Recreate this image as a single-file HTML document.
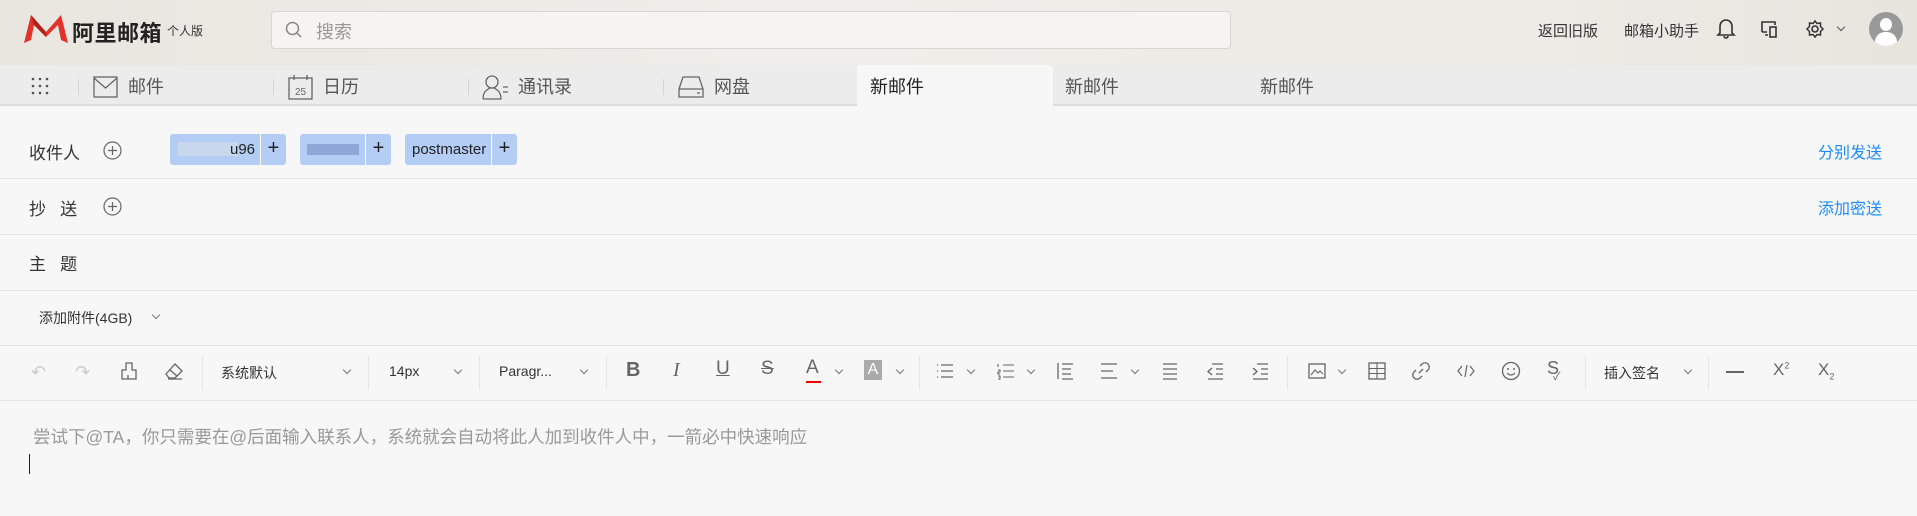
<!DOCTYPE html>
<html><head><meta charset="utf-8"><style>
*{margin:0;padding:0;box-sizing:border-box}
body{width:1917px;height:516px;overflow:hidden;background:#f7f7f7;font-family:"Liberation Sans","Noto Sans CJK SC",sans-serif;color:#333;position:relative}
.a{position:absolute;white-space:nowrap}
.hdr{left:0;top:0;width:1917px;height:65px;background:linear-gradient(90deg,#e9e5df,#f0eeea 40%,#eeebe6 80%,#e8e4de)}
.tabs{left:0;top:65px;width:1917px;height:41px;background:#ececec;border-bottom:2px solid #dcdcdc}
.sep{width:1px;height:16px;background:#d4d4d4;top:79px}
.tab{font-size:18px;color:#555;top:73px}
.line{left:0;width:1917px;height:1px;background:#e4e4e4}
.lbl{font-size:17px;color:#333}
.chip{height:31px;top:134px;background:#b3cdf5;border-radius:3px;font-size:15px;color:#222;line-height:31px}
.chip .p{position:absolute;right:0;top:0;width:26px;height:31px;border-left:1px solid #fff;text-align:center;font-size:20px;line-height:29px}
.blue{color:#1a8cff;font-size:16px}
.tb{top:363px;font-size:14px;color:#333}
.ic{top:361px;width:20px;height:20px;color:#666}
.tsep{top:356px;width:1px;height:34px;background:#e6e6e6}
.chev{top:367px;width:6px;height:6px;border-right:1.2px solid #777;border-bottom:1.2px solid #777;transform:rotate(45deg)}
svg{display:block}
</style></head><body>
<div class="a hdr"></div>
<svg class="a" style="left:24px;top:15px" width="44" height="30" viewBox="0 0 44 30"><path d="M0 28 L7 0 L22 17 L37 0 L44 28 L37 25 L34 10 L22 22 L10 10 L7 25Z" fill="#e3312c"/><path d="M7 0 L22 17 L22 22 L10 10Z" fill="#b0201c"/></svg>
<div class="a" style="left:72px;top:16px;font-size:22px;font-weight:bold;color:#222;letter-spacing:0.5px">阿里邮箱</div>
<div class="a" style="left:167px;top:22px;font-size:12px;color:#333">个人版</div>
<div class="a" style="left:271px;top:11px;width:960px;height:38px;background:#f5f4f2;border:1px solid #d8d6d2;border-radius:4px"></div>
<svg class="a" style="left:285px;top:21px" width="18" height="18" viewBox="0 0 18 18"><circle cx="7.5" cy="7.5" r="6" fill="none" stroke="#888" stroke-width="1.5"/><path d="M12 12 L16 16" stroke="#888" stroke-width="1.5"/></svg>
<div class="a" style="left:316px;top:18px;font-size:18px;color:#999">搜索</div>
<div class="a" style="left:1538px;top:20px;font-size:15px;color:#333">返回旧版</div>
<div class="a" style="left:1624px;top:20px;font-size:15px;color:#333">邮箱小助手</div>
<svg class="a" style="left:1716px;top:17px" width="20" height="22" viewBox="0 0 20 22"><path d="M4 16 V9 a6 6 0 0 1 12 0 V16 L18 18 H2Z M8 19 a2 2 0 0 0 4 0" fill="none" stroke="#333" stroke-width="1.6"/></svg>
<svg class="a" style="left:1759px;top:19px" width="20" height="20" viewBox="0 0 20 20"><path d="M3 13 V3 H16 V6 M3 13 H8 M6 16 H9" fill="none" stroke="#333" stroke-width="1.6"/><rect x="11" y="8" width="6" height="10" fill="none" stroke="#333" stroke-width="1.6"/></svg>
<svg class="a" style="left:1805px;top:19px" width="20" height="20" viewBox="0 0 20 20"><circle cx="10" cy="10" r="3" fill="none" stroke="#333" stroke-width="1.6"/><path d="M10 2 L12 4.5 L15.5 4 L15.5 7.5 L18 10 L15.5 12.5 L15.5 16 L12 15.5 L10 18 L8 15.5 L4.5 16 L4.5 12.5 L2 10 L4.5 7.5 L4.5 4 L8 4.5Z" fill="none" stroke="#333" stroke-width="1.5"/></svg>
<div class="a chev" style="left:1838px;top:24px;border-color:#555"></div>
<div class="a" style="left:1869px;top:12px;width:34px;height:34px;border-radius:50%;background:#999;overflow:hidden"><div style="position:absolute;left:11px;top:6px;width:12px;height:13px;border-radius:50%;background:#fff"></div><div style="position:absolute;left:6px;top:20px;width:22px;height:16px;border-radius:10px 10px 0 0;background:#fff"></div></div>

<div class="a tabs"></div>
<div class="a" style="left:857px;top:65px;width:196px;height:41px;background:#f7f7f7;border-radius:4px 4px 0 0"></div>
<svg class="a" style="left:31px;top:77px" width="18" height="18" viewBox="0 0 18 18" fill="#555"><circle cx="2" cy="2" r="1.3"/><circle cx="9" cy="2" r="1.3"/><circle cx="16" cy="2" r="1.3"/><circle cx="2" cy="9" r="1.3"/><circle cx="9" cy="9" r="1.3"/><circle cx="16" cy="9" r="1.3"/><circle cx="2" cy="16" r="1.3"/><circle cx="9" cy="16" r="1.3"/><circle cx="16" cy="16" r="1.3"/></svg>
<div class="a sep" style="left:78px"></div><div class="a sep" style="left:273px"></div><div class="a sep" style="left:468px"></div><div class="a sep" style="left:663px"></div>
<svg class="a" style="left:93px;top:76px" width="25" height="22" viewBox="0 0 25 22"><rect x="1" y="1" width="23" height="20" fill="none" stroke="#666" stroke-width="1.3"/><path d="M1 2 L12.5 12 L24 2" fill="none" stroke="#666" stroke-width="1.3"/></svg>
<div class="a tab" style="left:128px">邮件</div>
<svg class="a" style="left:288px;top:74px" width="25" height="26" viewBox="0 0 25 26"><rect x="1" y="4" width="23" height="21" fill="none" stroke="#666" stroke-width="1.3"/><path d="M6 1 V6 M19 1 V6" stroke="#666" stroke-width="1.3"/><text x="12.5" y="21" font-size="10" text-anchor="middle" fill="#666" font-family="Liberation Sans">25</text></svg>
<div class="a tab" style="left:323px">日历</div>
<svg class="a" style="left:482px;top:74px" width="28" height="26" viewBox="0 0 28 26"><circle cx="10" cy="8" r="6" fill="none" stroke="#666" stroke-width="1.3"/><path d="M1 25 C1 17 6 15 8 14 M12 14 C14 15 19 17 19 25 H1" fill="none" stroke="#666" stroke-width="1.3"/><path d="M21 13 H26 M21 18 H26" stroke="#666" stroke-width="1.3"/></svg>
<div class="a tab" style="left:518px">通讯录</div>
<svg class="a" style="left:678px;top:76px" width="26" height="22" viewBox="0 0 26 22"><path d="M1 13 L5 1 H21 L25 13 V21 H1Z M1 13 H25 M19 17 H22" fill="none" stroke="#666" stroke-width="1.3"/></svg>
<div class="a tab" style="left:714px">网盘</div>
<div class="a tab" style="left:870px;color:#222">新邮件</div>
<div class="a tab" style="left:1065px">新邮件</div>
<div class="a tab" style="left:1260px">新邮件</div>

<div class="a lbl" style="left:29px;top:139px">收件人</div>
<svg class="a" style="left:103px;top:141px" width="19" height="19" viewBox="0 0 19 19"><circle cx="9.5" cy="9.5" r="8.5" fill="none" stroke="#666" stroke-width="1.2"/><path d="M5 9.5 H14 M9.5 5 V14" stroke="#666" stroke-width="1.2"/></svg>
<div class="a chip" style="left:170px;width:116px"><span style="position:absolute;left:8px;top:8px;width:60px;height:14px;background:#c9d7ec"></span><span style="position:absolute;left:60px">u96</span><div class="p">+</div></div>
<div class="a chip" style="left:300px;width:91px"><span style="position:absolute;left:7px;top:10px;width:52px;height:11px;background:#8ea7d6"></span><div class="p">+</div></div>
<div class="a chip" style="left:405px;width:112px"><span style="position:absolute;left:7px">postmaster</span><div class="p">+</div></div>
<div class="a blue" style="left:1818px;top:139px">分别发送</div>
<div class="a line" style="top:178px"></div>
<div class="a lbl" style="left:29px;top:195px">抄&nbsp;&nbsp;&nbsp;送</div>
<svg class="a" style="left:103px;top:197px" width="19" height="19" viewBox="0 0 19 19"><circle cx="9.5" cy="9.5" r="8.5" fill="none" stroke="#666" stroke-width="1.2"/><path d="M5 9.5 H14 M9.5 5 V14" stroke="#666" stroke-width="1.2"/></svg>
<div class="a blue" style="left:1818px;top:195px">添加密送</div>
<div class="a line" style="top:234px"></div>
<div class="a lbl" style="left:29px;top:250px">主&nbsp;&nbsp;&nbsp;题</div>
<div class="a line" style="top:290px"></div>
<div class="a" style="left:39px;top:308px;font-size:14px;color:#333">添加附件(4GB)</div>
<div class="a chev" style="left:153px;top:312px"></div>
<div class="a line" style="top:345px"></div>

<div class="a" style="left:31px;top:362px;font-size:18px;color:#ccc">&#8630;</div>
<div class="a" style="left:75px;top:362px;font-size:18px;color:#ccc">&#8631;</div>
<svg class="a ic" style="left:119px" viewBox="0 0 20 20"><path d="M7 2 H13 V9 H17 V18 H3 V9 H7Z M9 18 V14" fill="none" stroke="#666" stroke-width="1.3"/></svg>
<svg class="a ic" style="left:164px" viewBox="0 0 20 20"><path d="M2 13 L11 3 L18 10 L11 17 H5Z M6 9 L13 15 M4 18 H18" fill="none" stroke="#666" stroke-width="1.3"/></svg>
<div class="a tsep" style="left:202px"></div>
<div class="a tb" style="left:221px">系统默认</div><div class="a chev" style="left:344px"></div>
<div class="a tsep" style="left:368px"></div>
<div class="a tb" style="left:389px">14px</div><div class="a chev" style="left:455px"></div>
<div class="a tsep" style="left:479px"></div>
<div class="a tb" style="left:499px">Paragr...</div><div class="a chev" style="left:581px"></div>
<div class="a tsep" style="left:606px"></div>
<div class="a" style="left:626px;top:359px;font-size:20px;color:#666;font-weight:bold">B</div>
<div class="a" style="left:673px;top:359px;font-size:20px;color:#666;font-style:italic;font-family:'Liberation Serif',serif">I</div>
<div class="a" style="left:716px;top:358px;font-size:19px;color:#666;text-decoration:underline">U</div>
<div class="a" style="left:761px;top:358px;font-size:19px;color:#666;text-decoration:line-through">S</div>
<div class="a" style="left:806px;top:357px;font-size:19px;color:#666">A</div><div class="a" style="left:806px;top:381px;width:15px;height:2px;background:#e00"></div><div class="a chev" style="left:836px"></div>
<div class="a" style="left:864px;top:360px;width:18px;height:20px;background:#aaa;color:#fff;font-size:16px;text-align:center;line-height:20px">A</div><div class="a chev" style="left:897px"></div>
<div class="a tsep" style="left:919px"></div>
<svg class="a ic" style="left:935px" viewBox="0 0 20 20"><path d="M2 4 H3 M2 10 H3 M2 16 H3 M6 4 H18 M6 10 H18 M6 16 H18" stroke="#666" stroke-width="1.3"/></svg><div class="a chev" style="left:968px"></div>
<svg class="a ic" style="left:996px" viewBox="0 0 20 20"><path d="M2 3 V6 M2 9 H4 V11 H2 V13 H4 M2 15 H4 V18 H2 M7 4 H18 M7 10 H18 M7 16 H18" fill="none" stroke="#666" stroke-width="1.1"/></svg><div class="a chev" style="left:1028px"></div>
<svg class="a ic" style="left:1055px" viewBox="0 0 20 20"><path d="M3 2 V18 M7 3 H18 M7 8 H16 M7 13 H16 M7 18 H18" stroke="#666" stroke-width="1.3"/></svg>
<svg class="a ic" style="left:1099px" viewBox="0 0 20 20"><path d="M2 3 H18 M2 10 H14 M2 17 H18" stroke="#666" stroke-width="1.3"/></svg><div class="a chev" style="left:1132px"></div>
<svg class="a ic" style="left:1160px" viewBox="0 0 20 20"><path d="M3 3 H17 M3 8 H17 M3 13 H17 M3 18 H17" stroke="#666" stroke-width="1.3"/></svg>
<svg class="a ic" style="left:1205px" viewBox="0 0 20 20"><path d="M7 3 H18 M11 8 H18 M11 13 H18 M3 18 H18 M7 7 L3 10.5 L7 14" fill="none" stroke="#666" stroke-width="1.3"/></svg>
<svg class="a ic" style="left:1250px" viewBox="0 0 20 20"><path d="M7 3 H18 M11 8 H18 M11 13 H18 M3 18 H18 M3 7 L7 10.5 L3 14" fill="none" stroke="#666" stroke-width="1.3"/></svg>
<div class="a tsep" style="left:1287px"></div>
<svg class="a ic" style="left:1307px" viewBox="0 0 20 20"><rect x="2" y="3" width="16" height="14" fill="none" stroke="#666" stroke-width="1.3"/><path d="M4 14 L8 9 L11 12 L13 10 L16 13" fill="none" stroke="#666" stroke-width="1.1"/></svg><div class="a chev" style="left:1339px"></div>
<svg class="a ic" style="left:1367px" viewBox="0 0 20 20"><rect x="2" y="2" width="16" height="16" fill="none" stroke="#666" stroke-width="1.3"/><path d="M10 2 V18 M2 7.5 H18 M2 12.5 H18" stroke="#666" stroke-width="1.1"/></svg>
<svg class="a ic" style="left:1411px" viewBox="0 0 20 20"><path d="M8 12 L12 8 M9 5 L11 3 a3.5 3.5 0 0 1 6 6 L15 11 M11 15 L9 17 a3.5 3.5 0 0 1 -6 -6 L5 9" fill="none" stroke="#666" stroke-width="1.3"/></svg>
<svg class="a ic" style="left:1456px" viewBox="0 0 20 20"><path d="M6 5 L2 10 L6 15 M14 5 L18 10 L14 15 M11 4 L9 16" fill="none" stroke="#666" stroke-width="1.2"/></svg>
<svg class="a ic" style="left:1501px" viewBox="0 0 20 20"><circle cx="10" cy="10" r="8.5" fill="none" stroke="#666" stroke-width="1.3"/><circle cx="7" cy="8" r="1" fill="#666"/><circle cx="13" cy="8" r="1" fill="#666"/><path d="M6 12 Q10 16 14 12" fill="none" stroke="#666" stroke-width="1.2"/></svg>
<div class="a" style="left:1547px;top:358px;font-size:18px;color:#666">S</div><div class="a" style="left:1553px;top:368px;font-size:11px;color:#666">&#10003;</div>
<div class="a tsep" style="left:1585px"></div>
<div class="a tb" style="left:1604px">插入签名</div><div class="a chev" style="left:1685px"></div>
<div class="a tsep" style="left:1708px"></div>
<div class="a" style="left:1726px;top:371px;width:18px;height:1.5px;background:#666"></div>
<div class="a" style="left:1773px;top:360px;font-size:17px;color:#666">X<sup style="font-size:9px">2</sup></div>
<div class="a" style="left:1818px;top:360px;font-size:17px;color:#666">X<sub style="font-size:9px">2</sub></div>
<div class="a line" style="top:400px"></div>

<div class="a" style="left:33px;top:424px;font-size:17.5px;color:#999">尝试下@TA，你只需要在@后面输入联系人，系统就会自动将此人加到收件人中，一箭必中快速响应</div>
<div class="a" style="left:29px;top:454px;width:1px;height:20px;background:#222"></div>
</body></html>
